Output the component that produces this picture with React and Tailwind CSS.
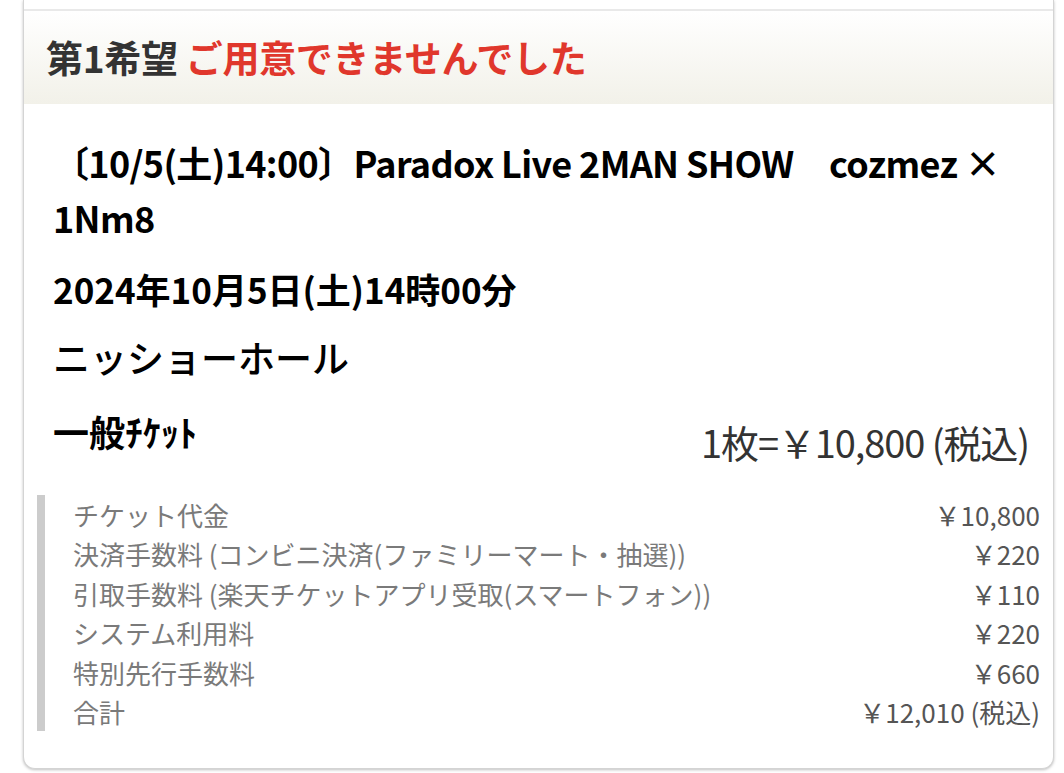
import React from "react";

const fees = [
  { label: "チケット代金", price: "￥10,800" },
  { label: "決済手数料 (コンビニ決済(ファミリーマート・抽選))", price: "￥220" },
  { label: "引取手数料 (楽天チケットアプリ受取(スマートフォン))", price: "￥110" },
  { label: "システム利用料", price: "￥220" },
  { label: "特別先行手数料", price: "￥660" },
  { label: "合計", price: "￥12,010 (税込)" },
];

const font = { fontFamily: '"Noto Sans CJK JP", "Noto Sans", sans-serif' };

const App = () => {
  return (
    <div className="min-h-screen bg-white pl-[23px] pr-[10px]" style={font}>
      <div className="w-[1031px] bg-white border-x border-b border-[#d4d4d4] rounded-b-[12px] shadow-[0_1px_3px_rgba(0,0,0,0.25)] overflow-hidden">
        <div className="h-[9px]" />

        {/* header: request status */}
        <div className="h-[95px] flex items-center px-[22px] border-t-2 border-[#e9e9e9] bg-gradient-to-b from-white to-[#f2f1e9]">
          <h2 className="text-[37px] font-bold text-[#333] leading-none tracking-[-0.3px]">
            第1希望 <span className="text-[#e0372c]">ご用意できませんでした</span>
          </h2>
        </div>

        <div className="pl-[29px] pr-[22px] pt-[31px] pb-[37px]">
          <p className="text-[36px] font-bold text-black leading-[55px] tracking-[-0.65px]">
            〔10/5(土)14:00〕Paradox Live 2MAN SHOW　cozmez ×
            1Nm8
          </p>
          <p className="mt-[18px] text-[35px] font-bold text-black leading-[52px]">
            2024年10月5日(土)14時00分
          </p>
          <p className="mt-[16px] text-[37px] font-medium text-black leading-[52px]">
            ニッショーホール
          </p>

          <div className="mt-[26px] flex items-start justify-between">
            <p className="text-[36px] font-bold text-black leading-[44px]">一般ﾁｹｯﾄ</p>
            <p className="mt-[11px] pr-[2px] text-[38px] text-[#333] leading-[44px] tracking-[-1.1px]">
              1枚=￥10,800 (税込)
            </p>
          </div>

          {/* fee breakdown */}
          <div className="mt-[31px] -ml-[16px] -mr-[9px] border-l-[8px] border-[#cccccc] pl-[28px]">
            {fees.map((fee) => (
              <div key={fee.label} className="flex justify-between text-[26px] leading-[39.4px]">
                <span className="text-[#7a7a7a]">{fee.label}</span>
                <span className="text-[#555]">{fee.price}</span>
              </div>
            ))}
          </div>
        </div>
      </div>
    </div>
  );
};

export default App;
